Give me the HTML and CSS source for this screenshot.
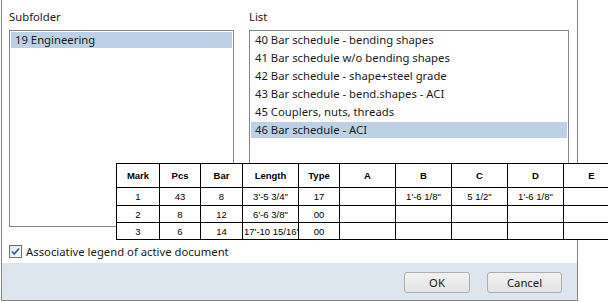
FILE: index.html
```html
<!DOCTYPE html>
<html lang="en">
<head>
  <meta charset="UTF-8">
  <meta name="viewport" content="width=device-width, initial-scale=1.0">
  <title>Legend</title>
  <link rel="stylesheet" href="styles.css">
</head>
<body>
  <div class="dialog">
    <div class="panes">
      <div class="pane pane-sub">
        <div class="label">Subfolder</div>
        <div class="listbox">
          <div class="item selected">19 Engineering</div>
        </div>
      </div>
      <div class="pane pane-list">
        <div class="label">List</div>
        <div class="listbox">
          <div class="item">40 Bar schedule - bending shapes</div>
          <div class="item">41 Bar schedule w/o bending shapes</div>
          <div class="item">42 Bar schedule - shape+steel grade</div>
          <div class="item">43 Bar schedule - bend.shapes - ACI</div>
          <div class="item">45 Couplers, nuts, threads</div>
          <div class="item selected">46 Bar schedule - ACI</div>
        </div>
      </div>
    </div>

    <label class="check">
      <svg class="box" width="13" height="13" viewBox="0 0 13 13">
        <defs>
          <linearGradient id="boxfill" x1="0" y1="0" x2="1" y2="1">
            <stop offset="0" stop-color="#dfe6ee"/>
            <stop offset="1" stop-color="#ffffff"/>
          </linearGradient>
        </defs>
        <rect x="0.5" y="0.5" width="12" height="12" fill="url(#boxfill)" stroke="#707070"/>
        <path d="M3 6.5 L5.3 9 L10 3.5" fill="none" stroke="#3b5f95" stroke-width="1.8"/>
      </svg>
      <span>Associative legend of active document</span>
    </label>

    <div class="footer">
      <button class="btn btn-ok">OK</button>
      <button class="btn btn-cancel">Cancel</button>
    </div>

    <!-- preview popup over the dialog -->
    <table class="preview">
      <colgroup>
        <col class="c-mark"><col class="c-pcs"><col class="c-bar"><col class="c-len"><col class="c-type">
        <col class="c-dim"><col class="c-dim"><col class="c-dim"><col class="c-dim"><col class="c-dim">
      </colgroup>
      <thead>
        <tr><th>Mark</th><th>Pcs</th><th>Bar</th><th>Length</th><th>Type</th><th>A</th><th>B</th><th>C</th><th>D</th><th>E</th></tr>
      </thead>
      <tbody>
        <tr><td>1</td><td>43</td><td>8</td><td>3'-5 3/4"</td><td>17</td><td></td><td>1'-6 1/8"</td><td>5 1/2"</td><td>1'-6 1/8"</td><td></td></tr>
        <tr><td>2</td><td>8</td><td>12</td><td>6'-6 3/8"</td><td>00</td><td></td><td></td><td></td><td></td><td></td></tr>
        <tr><td>3</td><td>6</td><td>14</td><td class="long">17'-10 15/16"</td><td>00</td><td></td><td></td><td></td><td></td><td></td></tr>
      </tbody>
    </table>
  </div>
</body>
</html>
```

FILE: styles.css
```css
* {
  box-sizing: border-box;
  margin: 0;
  padding: 0;
}
html, body {
  height: 100%;
  overflow: hidden;
}
body {
  background: #fff;
  font-family: "Noto Sans", "Open Sans", sans-serif;
  font-size: 11.3px;
  color: #1a1a1a;
}

.dialog {
  position: relative;
  width: 577px;
  height: 301px;
  margin-left: 1px;
  border: 1px solid #858585;
  border-top: 0;
  display: flex;
  flex-direction: column;
}

.panes {
  display: flex;
  gap: 15px;
  padding: 9px 7px 0 7px;
}
.pane-sub { width: 225px; }
.pane-list { width: 320px; }

.label {
  height: 16px;
  line-height: 16px;
  margin-bottom: 5px;
}

.listbox {
  height: 197px;
  border: 1px solid #828790;
  padding: 1px 1px 0;
  background: #fff;
}
.item {
  height: 16px;
  line-height: 16px;
  margin-bottom: 2px;
  padding-left: 4px;
  white-space: nowrap;
}
.item.selected {
  background: #bcd1e6;
}

.check {
  display: flex;
  align-items: center;
  gap: 4px;
  height: 17px;
  margin-top: 16px;
  padding-left: 7px;
}
.check .box { flex: none; }

.footer {
  margin-top: 3px;
  flex: 1;
  background: #dde5ef;
  display: flex;
  justify-content: flex-end;
  align-items: flex-start;
  gap: 17px;
  padding: 9px 15px 0 0;
}
.btn {
  height: 21px;
  font: inherit;
  color: #1a1a1a;
  border: 1px solid #adadad;
  border-radius: 3px;
  background: linear-gradient(#f2f2f2, #e3e3e3);
}
.btn-ok { width: 66px; }
.btn-cancel { width: 75px; }

.preview {
  position: absolute;
  left: 114px;
  top: 163px;
  width: 503px;
  table-layout: fixed;
  border-collapse: collapse;
  background: #fff;
  font-family: "Liberation Sans", Arial, sans-serif;
  font-size: 9.5px;
  color: #000;
}
.preview th, .preview td {
  border: 1px solid #000;
  text-align: center;
  white-space: nowrap;
  overflow: hidden;
  padding: 0;
}
.preview th {
  height: 24px;
  font-weight: bold;
}
.preview td { height: 17px; }
.preview tbody tr:first-child td { height: 18px; }
.preview td.long {
  text-align: left;
  padding-left: 1px;
}
.c-mark { width: 43px; }
.c-pcs { width: 41px; }
.c-bar { width: 42px; }
.c-len { width: 56px; }
.c-type { width: 41px; }
.c-dim { width: 56px; }
```
